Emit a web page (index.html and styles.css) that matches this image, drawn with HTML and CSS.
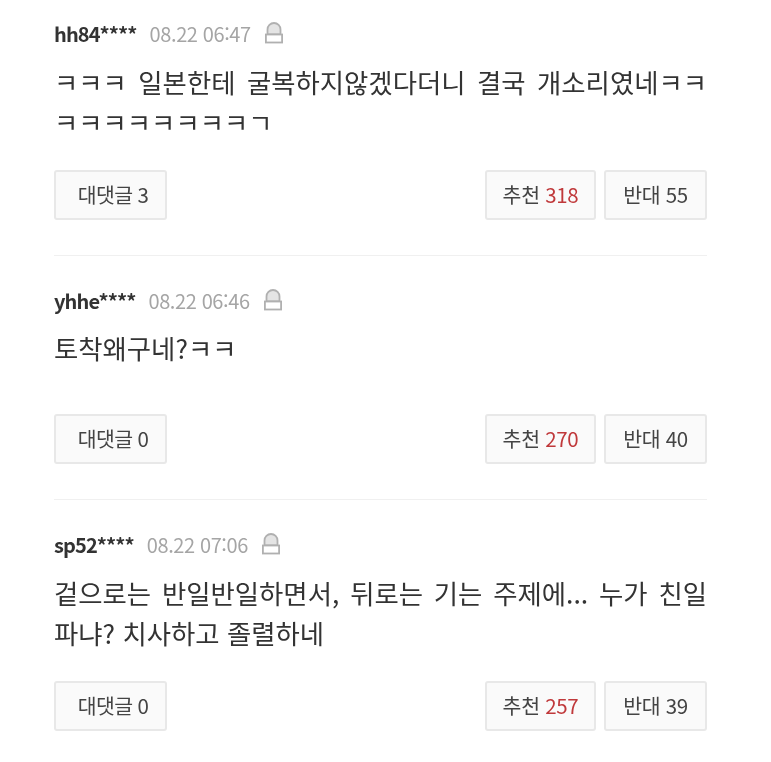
FILE: index.html
```html
<!DOCTYPE html>
<html lang="ko">
<head>
    <meta charset="UTF-8">
    <meta name="viewport" content="width=device-width, initial-scale=1.0">
    <title>댓글</title>
    <link rel="stylesheet" href="styles.css">
</head>
<body>

<div class="commentList">

  <div class="comment">
    <div class="commentHead">
      <span class="userName">hh84****</span>
      <span class="commentDate">08.22 06:47</span>
      <svg class="alarmIcon" width="20" height="22" viewBox="0 0 20 22" fill="none">
        <path d="M3.5 12.5V7.5a6.5 6.5 0 0 1 13 0v5z" fill="#e4e4e4" stroke="#b0b0b0" stroke-width="1.8"/>
        <rect x="1.9" y="12.5" width="16.2" height="8" fill="#fff" stroke="#b0b0b0" stroke-width="1.8"/>
      </svg>
    </div>
    <p class="commentText">ㅋㅋㅋ 일본한테 굴복하지않겠다더니 결국 개소리였네ㅋㅋㅋㅋㅋㅋㅋㅋㅋㅋㄱ</p>
    <div class="commentActions">
      <button class="actionBtn replyBtn">대댓글 3</button>
      <div class="voteBtns">
        <button class="actionBtn upBtn">추천 <em>318</em></button>
        <button class="actionBtn downBtn">반대 55</button>
      </div>
    </div>
  </div>

  <div class="comment">
    <div class="commentHead">
      <span class="userName">yhhe****</span>
      <span class="commentDate">08.22 06:46</span>
      <svg class="alarmIcon" width="20" height="22" viewBox="0 0 20 22" fill="none">
        <path d="M3.5 12.5V7.5a6.5 6.5 0 0 1 13 0v5z" fill="#e4e4e4" stroke="#b0b0b0" stroke-width="1.8"/>
        <rect x="1.9" y="12.5" width="16.2" height="8" fill="#fff" stroke="#b0b0b0" stroke-width="1.8"/>
      </svg>
    </div>
    <p class="commentText shortText">토착왜구네?ㅋㅋ</p>
    <div class="commentActions">
      <button class="actionBtn replyBtn">대댓글 0</button>
      <div class="voteBtns">
        <button class="actionBtn upBtn">추천 <em>270</em></button>
        <button class="actionBtn downBtn">반대 40</button>
      </div>
    </div>
  </div>

  <div class="comment">
    <div class="commentHead">
      <span class="userName">sp52****</span>
      <span class="commentDate">08.22 07:06</span>
      <svg class="alarmIcon" width="20" height="22" viewBox="0 0 20 22" fill="none">
        <path d="M3.5 12.5V7.5a6.5 6.5 0 0 1 13 0v5z" fill="#e4e4e4" stroke="#b0b0b0" stroke-width="1.8"/>
        <rect x="1.9" y="12.5" width="16.2" height="8" fill="#fff" stroke="#b0b0b0" stroke-width="1.8"/>
      </svg>
    </div>
    <p class="commentText">겉으로는 반일반일하면서, 뒤로는 기는 주제에... 누가 친일 파냐? 치사하고 졸렬하네</p>
    <div class="commentActions">
      <button class="actionBtn replyBtn">대댓글 0</button>
      <div class="voteBtns">
        <button class="actionBtn upBtn">추천 <em>257</em></button>
        <button class="actionBtn downBtn">반대 39</button>
      </div>
    </div>
  </div>

</div>

</body>
</html>
```

FILE: styles.css
```css
body, html {
  margin: 0;
  padding: 0;
  background: #fff;
  overflow: hidden;
  font-family: 'Noto Sans CJK KR', 'Noto Sans', sans-serif;
  color: #333;
}

.commentList {
  padding: 0 64px 0 54px;
  filter: blur(0.4px);
}

.comment {
  padding: 19px 0 35px;
  border-bottom: 1px solid #f0f0f0;
}

.comment + .comment {
  padding-top: 30px;
}

.comment:last-child {
  border-bottom: none;
}

.commentHead {
  display: flex;
  align-items: center;
  height: 28px;
}

.userName {
  font-size: 20px;
  font-weight: 700;
  letter-spacing: -0.9px;
  color: #333;
}

.commentDate {
  margin-left: 13px;
  font-size: 20px;
  letter-spacing: -0.4px;
  color: #a5a5a5;
}

.alarmIcon {
  margin-left: 13px;
}

.commentText {
  margin: 15px 0 28px;
  font-size: 26.4px;
  line-height: 40px;
  text-align: justify;
  color: #333;
}

.shortText {
  margin: 14px 0 46px;
}

.commentActions {
  display: flex;
  justify-content: space-between;
}

.voteBtns {
  display: flex;
  gap: 8px;
}

.actionBtn {
  height: 50px;
  padding: 0 0 3px;
  font-family: inherit;
  font-size: 20.5px;
  letter-spacing: -0.3px;
  color: #444;
  background: #fafafa;
  border: 2px solid #e8e8e8;
  border-radius: 3px;
}

.actionBtn em {
  font-style: normal;
  color: #c0393b;
}

.replyBtn {
  width: 113px;
  padding-left: 5px;
  letter-spacing: -0.6px;
}

.upBtn {
  width: 111px;
}

.downBtn {
  width: 103px;
}
```
